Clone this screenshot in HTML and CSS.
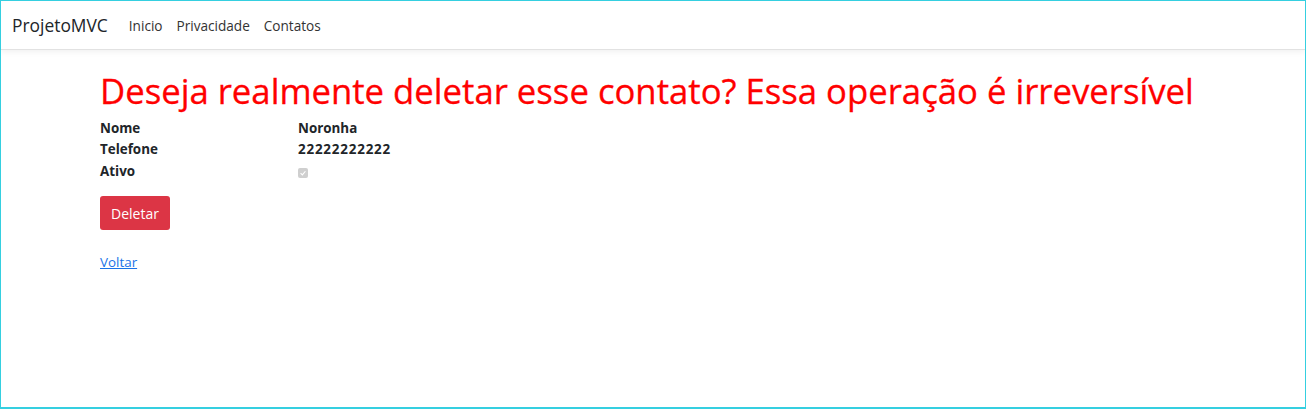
FILE: index.html
```html
<!DOCTYPE html>
<html lang="pt">
<head>
<meta charset="utf-8">
<title>ProjetoMVC</title>
<link rel="stylesheet" href="styles.css">
</head>
<body>
<div class="frame">
  <header class="navbar">
    <a class="brand" href="#">ProjetoMVC</a>
    <nav class="nav">
      <a href="#">Inicio</a>
      <a href="#">Privacidade</a>
      <a href="#">Contatos</a>
    </nav>
  </header>
  <main class="container">
    <h1 class="title">Deseja realmente deletar esse contato? Essa operação é irreversível</h1>
    <dl class="details">
      <dt>Nome</dt><dd>Noronha</dd>
      <dt>Telefone</dt><dd class="num">22222222222</dd>
      <dt>Ativo</dt><dd><span class="check"><svg viewBox="0 0 10 10" width="8" height="8"><path d="M2 5.2 L4.2 7.3 L8 2.8" fill="none" stroke="#fff" stroke-width="1.4"/></svg></span></dd>
    </dl>
    <button class="btn-danger" type="button">Deletar</button>
    <div class="back"><a href="#">Voltar</a></div>
  </main>
</div>
</body>
</html>
```
FILE: styles.css
```css
* { box-sizing: border-box; }
html, body { margin: 0; padding: 0; height: 100%; }
body {
  font-family: "Open Sans", "Noto Sans", "Liberation Sans", sans-serif;
  color: #212529;
  background: #fff;
}
.frame {
  height: 409px;
  border: 1px solid #35cfe0;
  border-bottom-width: 2px;
  overflow: hidden;
}
.navbar {
  height: 49px;
  display: flex;
  align-items: center;
  padding: 0 11px;
  border-bottom: 1px solid #e2e2e2;
  box-shadow: 0 2px 6px rgba(0,0,0,0.06);
  background: #fff;
}
.brand {
  font-size: 17.4px;
  color: #212529;
  text-decoration: none;
  margin-right: 21px;
}
.nav { display: flex; gap: 14px; }
.nav a {
  font-size: 13.6px;
  color: #333;
  text-decoration: none;
}
.container {
  padding: 20px 0 0 99px;
}
.title {
  margin: 0 0 6px;
  font-size: 34.7px;
  font-weight: 500;
  color: #ff0000;
  line-height: 1.2;
  -webkit-text-stroke: 0.3px #ff0000;
}
.details {
  display: grid;
  grid-template-columns: 198px 1fr;
  margin: 0;
  font-size: 13.4px;
  font-weight: 700;
  line-height: 21.5px;
}
.details dt, .details dd { margin: 0; }
.num { letter-spacing: 0.8px; }
.check {
  display: inline-block;
  width: 10px;
  height: 10px;
  background: #cfcfcf;
  border-radius: 2px;
  vertical-align: -1px;
  line-height: 0;
  padding: 1px;
}
.btn-danger {
  margin-top: 14px;
  background: #dc3545;
  color: #fff;
  border: 0;
  border-radius: 3px;
  height: 34px;
  padding: 0 11px;
  font-family: inherit;
  font-size: 14px;
}
.back { margin-top: 23px; font-size: 13.4px; }
.back a { color: #1a73e8; }
```
